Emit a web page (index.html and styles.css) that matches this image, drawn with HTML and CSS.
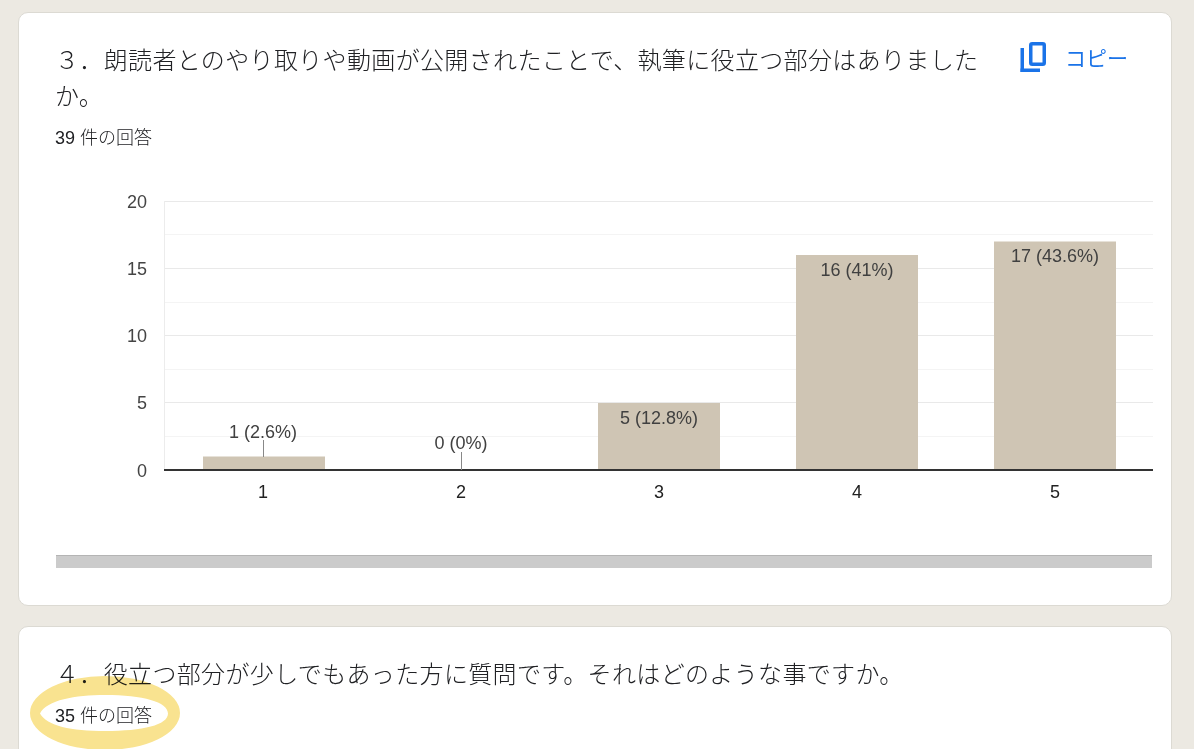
FILE: index.html
```html
<!DOCTYPE html>
<html lang="ja">
<head>
<meta charset="utf-8">
<title>回答</title>
<link rel="stylesheet" href="styles.css">
</head>
<body>
<main class="page">
  <section class="card">
    <div class="card-head">
      <h2 class="q-title">３．朗読者とのやり取りや動画が公開されたことで、執筆に役立つ部分はありましたか。</h2>
      <button class="copy-btn" type="button">
        <svg class="copy-icon" width="26" height="30" viewBox="0 0 26 30" aria-hidden="true">
          <rect x="10.75" y="1.75" width="13.5" height="20.5" rx="1.5" fill="none" stroke="#1a73e8" stroke-width="3.5"/>
          <rect x="0.5" y="6" width="3.5" height="24" fill="#1a73e8"/>
          <rect x="0.5" y="26.5" width="19.5" height="3.5" fill="#1a73e8"/>
        </svg>
        <span>コピー</span>
      </button>
    </div>
    <p class="count">39 件の回答</p>
    <svg class="chart" width="1098" height="340" viewBox="0 0 1098 340">
      <g stroke-width="1">
        <line x1="109" y1="266.5" x2="1098" y2="266.5" stroke="#f4f4f4"/>
        <line x1="109" y1="199.5" x2="1098" y2="199.5" stroke="#f4f4f4"/>
        <line x1="109" y1="132.5" x2="1098" y2="132.5" stroke="#f4f4f4"/>
        <line x1="109" y1="64.5" x2="1098" y2="64.5" stroke="#f4f4f4"/>
        <line x1="109" y1="232.5" x2="1098" y2="232.5" stroke="#e9e9e9"/>
        <line x1="109" y1="165.5" x2="1098" y2="165.5" stroke="#e9e9e9"/>
        <line x1="109" y1="98.5" x2="1098" y2="98.5" stroke="#e9e9e9"/>
        <line x1="109" y1="31.5" x2="1098" y2="31.5" stroke="#e9e9e9"/>
        <line x1="109.5" y1="31" x2="109.5" y2="300" stroke="#ececec"/>
      </g>
      <g fill="#cfc5b4">
        <rect x="148" y="286.5" width="122" height="13.5"/>
        <rect x="543" y="233" width="122" height="67"/>
        <rect x="741" y="85" width="122" height="215"/>
        <rect x="939" y="71.5" width="122" height="228.5"/>
      </g>
      <line x1="109" y1="300" x2="1098" y2="300" stroke="#333" stroke-width="2"/>
      <g stroke="#888" stroke-width="1">
        <line x1="208.5" y1="270" x2="208.5" y2="287"/>
        <line x1="406.5" y1="282" x2="406.5" y2="300"/>
      </g>
      <g class="lbl" text-anchor="middle" fill="#404040">
        <text x="208" y="267.5">1 (2.6%)</text>
        <text x="406" y="278.5">0 (0%)</text>
        <text x="604" y="253.5">5 (12.8%)</text>
        <text x="802" y="105.5">16 (41%)</text>
        <text x="1000" y="92">17 (43.6%)</text>
      </g>
      <g class="lbl" text-anchor="end" fill="#444">
        <text x="92" y="37.5">20</text>
        <text x="92" y="104.75">15</text>
        <text x="92" y="172">10</text>
        <text x="92" y="239.25">5</text>
        <text x="92" y="306.5">0</text>
      </g>
      <g class="lbl" text-anchor="middle" fill="#222">
        <text x="208" y="327.5">1</text>
        <text x="406" y="327.5">2</text>
        <text x="604" y="327.5">3</text>
        <text x="802" y="327.5">4</text>
        <text x="1000" y="327.5">5</text>
      </g>
    </svg>
    <div class="hscroll"></div>
  </section>

  <section class="card card-2">
    <h2 class="q-title">４．役立つ部分が少しでもあった方に質問です。それはどのような事ですか。</h2>
    <div class="count-wrap">
      <p class="count">35 件の回答</p>
      <svg class="marker" width="170" height="92" viewBox="0 0 170 92" aria-hidden="true">
        <path fill="#f9e390" fill-rule="evenodd" d="M5 42 a75 37 0 1 0 150 0 a75 37 0 1 0 -150 0 Z M15 42.5 C 22 29, 50 24, 80 24 C 118 24, 143 31, 143 42.5 C 143 54, 118 60, 80 60 C 46 60, 22 55, 15 42.5 Z"/>
      </svg>
    </div>
  </section>
</main>
</body>
</html>
```

FILE: styles.css
```css
* {
  box-sizing: border-box;
}

html,
body {
  margin: 0;
  padding: 0;
}

body {
  background: #ece9e2;
  font-family: "Liberation Sans", "Noto Sans CJK JP", sans-serif;
  color: #202124;
  overflow: hidden;
}

.page {
  display: flex;
  flex-direction: column;
  gap: 20px;
  padding: 12px 0 0 18px;
}

.card {
  width: 1154px;
  background: #ffffff;
  border: 1px solid #dcdad3;
  border-radius: 10px;
  padding: 28px 18px 37px 36px;
}

.card-head {
  display: flex;
  align-items: flex-start;
}

.q-title {
  flex: 1;
  margin: 0;
  padding-right: 10px;
  font-family: "Noto Sans CJK JP", sans-serif;
  font-size: 24px;
  line-height: 36px;
  font-weight: 300;
  letter-spacing: 0.35px;
  color: #202124;
}

.copy-btn {
  display: flex;
  align-items: center;
  gap: 19px;
  margin-top: 1px;
  padding: 0 25px 0 11px;
  border: 0;
  background: none;
  color: #1a73e8;
  font-family: "Noto Sans CJK JP", sans-serif;
  font-size: 21px;
  line-height: 30px;
  font-weight: 400;
  cursor: pointer;
}

.copy-icon {
  display: block;
  flex: none;
}

.count {
  margin: 12px 0 0;
  font-size: 18px;
  line-height: 26px;
  font-weight: 300;
  color: #202124;
}

.chart {
  display: block;
  margin-top: 19px;
}

.lbl {
  font-family: "Liberation Sans", sans-serif;
  font-size: 18px;
}

.hscroll {
  margin: 45px 1px 0 1px;
  height: 13px;
  background: #cbcbcb;
  border-top: 1px solid #b4b4b4;
}

.card-2 {
  min-height: 240px;
}

.count-wrap {
  position: relative;
  width: max-content;
  margin-top: 12px;
}

.count-wrap .count {
  margin: 0;
}

.marker {
  position: absolute;
  left: -30px;
  top: -32px;
  mix-blend-mode: multiply;
  pointer-events: none;
}
```
